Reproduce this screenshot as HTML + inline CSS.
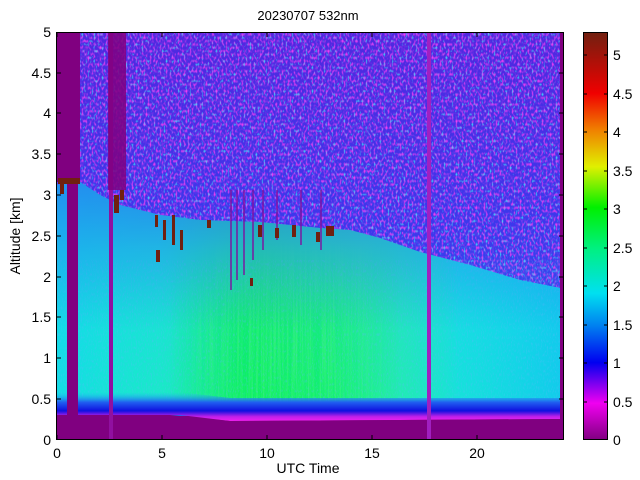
<!DOCTYPE html>
<html><head><meta charset="utf-8"><style>
html,body{margin:0;padding:0;background:#fff;width:640px;height:480px;overflow:hidden}
svg{display:block;font-family:"Liberation Sans",sans-serif}
</style></head><body>
<svg width="640" height="480" viewBox="0 0 640 480">
<defs>
<filter id="nz" x="0" y="0" width="100%" height="100%">
<feTurbulence type="fractalNoise" baseFrequency="0.5 0.3" numOctaves="1" seed="3"/>
<feColorMatrix type="matrix" values="0 0 0 0 0.85  0 0 0 0 0.05  0 0 0 0 0.9  0 0 0 3 -1.4"/>
</filter>
<filter id="nzc" x="0" y="0" width="100%" height="100%">
<feTurbulence type="fractalNoise" baseFrequency="0.5 0.3" numOctaves="1" seed="11"/>
<feColorMatrix type="matrix" values="0 0 0 0 0.05  0 0 0 0 0.85  0 0 0 0 0.95  0 0 0 3 -1.7"/>
</filter>
<filter id="nz2" x="0" y="0" width="100%" height="100%">
<feTurbulence type="fractalNoise" baseFrequency="0.8 0.3" numOctaves="2" seed="7"/>
<feColorMatrix type="matrix" values="0 0 0 0 0.1  0 0 0 0 0.5  0 0 0 0 0.95  0 0 0 2 -1.0"/>
</filter>
<filter id="vs" x="0" y="0" width="100%" height="100%">
<feTurbulence type="fractalNoise" baseFrequency="0.6 0.01" numOctaves="1" seed="5"/>
<feColorMatrix type="matrix" values="0 0 0 0 0.1  0 0 0 0 0.95  0 0 0 0 0.2  0 0 0 2.5 -1.0"/>
</filter>
<linearGradient id="up" x1="0" y1="0" x2="0" y2="1">
<stop offset="0" stop-color="#5028e0"/><stop offset="0.5" stop-color="#3c38ec"/><stop offset="1" stop-color="#2860f0"/>
</linearGradient>
<linearGradient id="mid" x1="0" y1="0" x2="0" y2="1">
<stop offset="0" stop-color="#20b0f0"/><stop offset="0.3" stop-color="#20d8e0"/><stop offset="1" stop-color="#20f0b8"/>
</linearGradient>
<linearGradient id="midH" x1="0" y1="0" x2="1" y2="0">
<stop offset="0" stop-color="#10d8f0" stop-opacity="0.8"/>
<stop offset="0.2" stop-color="#10e0e0" stop-opacity="0.4"/>
<stop offset="0.4" stop-color="#20f060" stop-opacity="0.45"/>
<stop offset="0.6" stop-color="#30f080" stop-opacity="0.35"/>
<stop offset="0.8" stop-color="#10d8f0" stop-opacity="0.6"/>
<stop offset="1" stop-color="#10c8f0" stop-opacity="0.9"/>
</linearGradient>
<linearGradient id="grH" x1="0" y1="0" x2="1" y2="0">
<stop offset="0" stop-color="#00f040" stop-opacity="0"/><stop offset="0.3" stop-color="#00f040" stop-opacity="0.6"/><stop offset="0.7" stop-color="#00f040" stop-opacity="0.5"/><stop offset="1" stop-color="#00f040" stop-opacity="0"/>
</linearGradient>
<linearGradient id="grV" x1="0" y1="0" x2="0" y2="1">
<stop offset="0" stop-color="#fff" stop-opacity="0"/><stop offset="0.5" stop-color="#fff" stop-opacity="0.8"/><stop offset="1" stop-color="#fff" stop-opacity="1"/>
</linearGradient>
<linearGradient id="hMaskG" x1="0" y1="0" x2="1" y2="0">
<stop offset="0" stop-color="#fff" stop-opacity="0"/><stop offset="0.3" stop-color="#fff" stop-opacity="1"/><stop offset="0.7" stop-color="#fff" stop-opacity="1"/><stop offset="1" stop-color="#fff" stop-opacity="0"/>
</linearGradient>
<mask id="gm"><rect x="170" y="240" width="230" height="165" fill="url(#grV)"/></mask>
<mask id="hm"><rect x="170" y="240" width="230" height="165" fill="url(#hMaskG)"/></mask>
<linearGradient id="ct" x1="0" y1="0" x2="0" y2="1">
<stop offset="0" stop-color="#3050f0" stop-opacity="0.5"/><stop offset="1" stop-color="#3050f0" stop-opacity="0"/>
</linearGradient>
<linearGradient id="bot" x1="0" y1="0" x2="0" y2="1">
<stop offset="0" stop-color="#20c0f0" stop-opacity="0"/><stop offset="0.35" stop-color="#2060f0"/><stop offset="0.65" stop-color="#1010e0"/><stop offset="0.85" stop-color="#c020e8"/><stop offset="1" stop-color="#f020f0"/>
</linearGradient>
<linearGradient id="cb" x1="0" y1="1" x2="0" y2="0">
<stop offset="0" stop-color="#800080"/>
<stop offset="0.09" stop-color="#f000f0"/>
<stop offset="0.19" stop-color="#0000f0"/>
<stop offset="0.28" stop-color="#0080f0"/>
<stop offset="0.36" stop-color="#00e0f0"/>
<stop offset="0.47" stop-color="#00f080"/>
<stop offset="0.57" stop-color="#00f000"/>
<stop offset="0.67" stop-color="#e0f000"/>
<stop offset="0.76" stop-color="#f08000"/>
<stop offset="0.85" stop-color="#f00000"/>
<stop offset="1" stop-color="#702010"/>
</linearGradient>
</defs>
<text x="308" y="20" font-size="13" text-anchor="middle">20230707 532nm</text>
<rect x="56" y="32" width="508" height="408" fill="#800080"/>
<rect x="57" y="32" width="503" height="384" fill="url(#up)"/>
<rect x="57" y="32" width="503" height="270" filter="url(#nz)"/>
<rect x="57" y="32" width="503" height="270" filter="url(#nzc)"/>
<polygon fill="url(#mid)" points="57,185 80,182 100,195 120,205 160,215 200,220 260,222 320,228 350,230 380,238 420,252 470,265 520,280 560,288 560,404 57,404"/>
<polygon fill="url(#midH)" points="57,185 80,182 100,195 120,205 160,215 200,220 260,222 320,228 350,230 380,238 420,252 470,265 520,280 560,288 560,404 57,404"/>
<g mask="url(#gm)">
<rect x="170" y="240" width="230" height="165" fill="url(#grH)"/>
<g mask="url(#hm)"><rect x="170" y="240" width="230" height="165" filter="url(#vs)" opacity="0.5"/></g>
</g>
<rect x="57" y="260" width="503" height="144" filter="url(#nz2)" opacity="0.6"/>
<polygon fill="url(#ct)" points="57,185 80,182 100,195 120,205 160,215 200,220 260,222 320,228 350,230 380,238 420,252 470,265 520,280 560,288 560,330 57,330"/>
<polygon fill="url(#bot)" points="57,392 180,392 230,398 560,398 560,419 230,421 180,415 57,415"/>
<polygon fill="#800080" points="57,415 170,415 200,418 230,421 560,419 560,440 57,440"/>
<rect x="560" y="32" width="4" height="408" fill="#800080"/>
<rect x="57" y="32" width="23" height="150" fill="#800080"/>
<rect x="67" y="32" width="11" height="408" fill="#800080"/>
<rect x="109" y="32" width="4" height="408" fill="#9010a0"/>
<rect x="108" y="32" width="18" height="158" fill="#800080" opacity="0.85"/>
<rect x="427" y="32" width="4" height="408" fill="#a020c0"/>
<g fill="#8010a0" opacity="0.7">
<rect x="230" y="190" width="2" height="100"/><rect x="236" y="190" width="2" height="90"/><rect x="243" y="190" width="2" height="85"/>
<rect x="252" y="190" width="2" height="70"/><rect x="262" y="190" width="2" height="60"/><rect x="300" y="190" width="2" height="55"/>
<rect x="320" y="190" width="2" height="60"/><rect x="276" y="190" width="2" height="50"/>
</g>
<g fill="#702010">
<rect x="58" y="178" width="22" height="6"/><rect x="60" y="184" width="4" height="10"/>
<rect x="114" y="195" width="5" height="18"/><rect x="120" y="190" width="4" height="10"/>
<rect x="155" y="215" width="3" height="12"/><rect x="163" y="220" width="3" height="20"/><rect x="172" y="215" width="3" height="30"/><rect x="180" y="230" width="3" height="20"/><rect x="156" y="250" width="4" height="12"/>
<rect x="207" y="220" width="4" height="8"/><rect x="258" y="225" width="4" height="12"/><rect x="275" y="228" width="4" height="10"/><rect x="292" y="225" width="4" height="12"/>
<rect x="316" y="232" width="4" height="10"/><rect x="326" y="226" width="8" height="10"/><rect x="250" y="278" width="3" height="8"/>
</g>
<rect x="56.5" y="32.5" width="507" height="407" fill="none" stroke="#000"/>
<g stroke="#000">
<path d="M57 440v-5M162 440v-5M267 440v-5M372 440v-5M477 440v-5M57 32v5M162 32v5M267 32v5M372 32v5M477 32v5"/>
<path d="M56 399h5M56 358h5M56 317h5M56 277h5M56 236h5M56 195h5M56 154h5M56 113h5M56 73h5M564 399h-5M564 358h-5M564 317h-5M564 277h-5M564 236h-5M564 195h-5M564 154h-5M564 113h-5M564 73h-5"/>
</g>
<g font-size="14" text-anchor="end">
<text x="51" y="445">0</text><text x="51" y="404">0.5</text><text x="51" y="363">1</text><text x="51" y="322">1.5</text><text x="51" y="282">2</text><text x="51" y="241">2.5</text><text x="51" y="200">3</text><text x="51" y="159">3.5</text><text x="51" y="118">4</text><text x="51" y="78">4.5</text><text x="51" y="37">5</text>
</g>
<g font-size="14" text-anchor="middle">
<text x="57" y="458">0</text><text x="162" y="458">5</text><text x="267" y="458">10</text><text x="372" y="458">15</text><text x="477" y="458">20</text>
</g>
<text x="308" y="473" font-size="14" text-anchor="middle">UTC Time</text>
<text transform="translate(20,236) rotate(-90)" font-size="14" text-anchor="middle">Altitude [km]</text>
<rect x="583" y="32" width="25" height="408" fill="url(#cb)"/>
<rect x="583.5" y="32.5" width="24" height="407" fill="none" stroke="#000"/>
<g stroke="#000">
<path d="M608 402h-4M608 363h-4M608 325h-4M608 286h-4M608 248h-4M608 209h-4M608 171h-4M608 132h-4M608 94h-4M608 55h-4M583 402h4M583 363h4M583 325h4M583 286h4M583 248h4M583 209h4M583 171h4M583 132h4M583 94h4M583 55h4"/>
</g>
<g font-size="14">
<text x="613" y="445">0</text><text x="613" y="407">0.5</text><text x="613" y="368">1</text><text x="613" y="330">1.5</text><text x="613" y="291">2</text><text x="613" y="253">2.5</text><text x="613" y="214">3</text><text x="613" y="176">3.5</text><text x="613" y="137">4</text><text x="613" y="99">4.5</text><text x="613" y="60">5</text>
</g>
</svg>
</body></html>
